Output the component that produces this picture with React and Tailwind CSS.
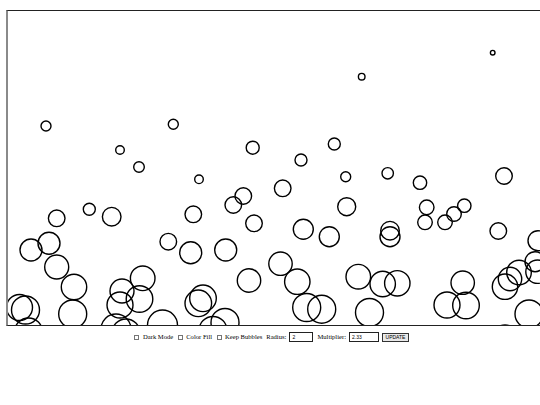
import React from "react";

const circles = [
  [492.7, 52.7, 2.3],
  [361.7, 76.7, 3.3],
  [46, 126, 5],
  [173.3, 124.3, 5],
  [120, 150, 4.3],
  [139, 167, 5.3],
  [252.7, 147.7, 6.5],
  [334.3, 144, 6],
  [301, 160, 6],
  [199, 179.3, 4.3],
  [345.7, 176.7, 5],
  [387.7, 173.3, 5.7],
  [420, 182.7, 6.7],
  [504, 176, 8.3],
  [282.7, 188.3, 8.3],
  [243.3, 196, 8.3],
  [233.3, 205, 8.3],
  [346.7, 206.7, 9],
  [89.3, 209.3, 6],
  [111.7, 216.7, 9.3],
  [56.7, 218.3, 8.3],
  [193.3, 214.3, 8.3],
  [426.7, 207.3, 7.3],
  [464.3, 205.7, 6.7],
  [454, 214, 7.3],
  [445, 222.3, 7.3],
  [425, 222.3, 7.3],
  [254, 223.3, 8.3],
  [303.3, 229.3, 10],
  [390, 230.7, 9.3],
  [390, 236.7, 10],
  [329.3, 236.7, 10],
  [498.3, 231, 8.3],
  [538, 240.7, 10],
  [49, 243.3, 11],
  [31, 250, 11],
  [168.3, 241.7, 8.3],
  [190.7, 252.7, 11],
  [225.7, 250, 11],
  [56.7, 267, 12],
  [142.7, 278.3, 12.3],
  [74, 287, 12.7],
  [249, 280.5, 11.7],
  [280.5, 263.7, 11.7],
  [297.3, 281.7, 12.7],
  [358.3, 276.7, 12.3],
  [382.7, 284, 12.7],
  [397.3, 283.3, 12.7],
  [462.7, 282.7, 11.7],
  [505, 286.7, 12.7],
  [510, 279, 11.7],
  [519, 272.5, 12.3],
  [537.5, 271.7, 11.7],
  [535, 261.7, 10],
  [122, 291, 12],
  [139.5, 299, 13.3],
  [120, 305, 13],
  [203, 298.3, 13.3],
  [198.3, 303.3, 13.3],
  [19.5, 307.5, 13],
  [25.5, 310, 14],
  [72.7, 314, 14],
  [306.7, 307.5, 14],
  [321.7, 309.2, 14],
  [369.5, 312.5, 14],
  [447, 305, 13],
  [466, 305.5, 13.3],
  [529, 314, 14],
  [162.5, 325, 15],
  [116, 329, 15],
  [126, 333, 14],
  [213, 330.5, 14],
  [225, 322.5, 14],
  [28.5, 332, 14],
  [505, 339, 14],
];

function Box() {
  return (
    <span className="inline-block w-[5px] h-[5px] border border-[#767676] bg-white shrink-0" />
  );
}

export default function App() {
  return (
    <div
      className="w-[540px] h-[405px] overflow-hidden bg-white"
      style={{ fontFamily: '"Liberation Serif", "Times New Roman", serif' }}
    >
      <div className="pt-[10px] pl-[6px]">
        <div className="w-[540px] h-[316px] border-t border-b border-l-2 border-t-[#222] border-b-[#222] border-l-[#8a8a8a]">
          <svg
            width="532"
            height="314"
            viewBox="8 11 532 314"
            className="block"
          >
            {circles.map(([x, y, r], i) => (
              <circle
                key={i}
                cx={x}
                cy={y}
                r={r}
                fill="none"
                stroke="#000"
                strokeWidth="1.4"
              />
            ))}
          </svg>
        </div>
      </div>
      <div className="flex items-center pl-[134px] mt-[6px] h-[10px] text-[6.6px] leading-none text-black whitespace-nowrap">
        <Box />
        <span className="ml-[4px]">Dark Mode</span>
        <span className="ml-[5px] flex"><Box /></span>
        <span className="ml-[3px]">Color Fill</span>
        <span className="ml-[5px] flex"><Box /></span>
        <span className="ml-[3px]">Keep Bubbles</span>
        <span className="ml-[4px]">Radius:</span>
        <span
          className="ml-[3px] w-[24px] h-[9.5px] border border-[#222] bg-white flex items-center pl-[2px] text-[5px] text-black"
          style={{ fontFamily: '"Liberation Sans", Arial, sans-serif' }}
        >
          2
        </span>
        <span className="ml-[4px]">Multiplier:</span>
        <span
          className="ml-[3px] w-[30.5px] h-[9.5px] border border-[#222] bg-white flex items-center pl-[2px] text-[5px] text-black"
          style={{ fontFamily: '"Liberation Sans", Arial, sans-serif' }}
        >
          2.33
        </span>
        <span
          className="ml-[2.5px] w-[27px] h-[9px] border border-[#333] bg-[#e9e9e9] flex items-center justify-center text-[5px] text-black"
          style={{ fontFamily: '"Liberation Sans", Arial, sans-serif' }}
        >
          UPDATE
        </span>
      </div>
    </div>
  );
}
